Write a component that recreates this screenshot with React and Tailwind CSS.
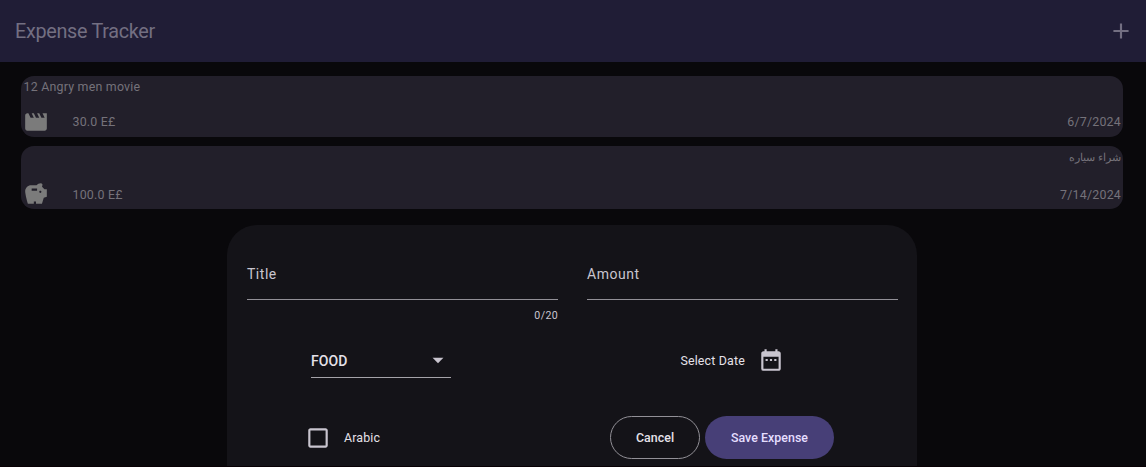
import { MdAdd, MdArrowDropDown, MdCheckBoxOutlineBlank, MdDateRange, MdMovie, MdSavings } from "react-icons/md";

function Expense({ title, amount, date, icon: Icon, rtl, className }) {
  return (
    <article className={`flex flex-col justify-between rounded-[13px] bg-[#221f2a] pr-[2px] pl-[2px] text-[12.4px] tracking-[0.22px] text-[#75727a] ${className}`}>
      {rtl ? (
        <h2 dir="rtl" className="pt-px text-[11.4px] leading-5 tracking-normal">{title}</h2>
      ) : (
        <h2 className="pt-px pl-[0.5px] leading-5">{title}</h2>
      )}
      <div className="flex h-[30px] items-center">
        <Icon className="size-[26px] text-[#7b7b7b]" />
        <span className={rtl ? "ml-[23.5px] pt-[2px]" : "ml-[23.5px]"}>{amount}</span>
        <time className={rtl ? "ml-auto pt-[2px]" : "ml-auto"}>{date}</time>
      </div>
    </article>
  );
}

function Field({ label, counter }) {
  return (
    <div className="w-[311px]">
      <div className="h-[36px] border-b border-[#929097] text-[14px] leading-5 tracking-[0.52px] text-[#c9c5cf]">{label}</div>
      {counter && <div className="pt-[6px] text-right text-[10.6px] leading-5 tracking-[0.35px] text-[#c9c5cf]">{counter}</div>}
    </div>
  );
}

function ExpenseForm() {
  return (
    <section className="absolute top-[225px] left-[227px] h-[241px] w-[690px] overflow-hidden rounded-t-[30px] bg-[#141318] text-[#e5e1e9]">
      <div className="flex h-[110px] justify-between pt-[39px] pr-[19px] pl-[20px]">
        <Field label="Title" counter="0/20" />
        <Field label="Amount" />
      </div>
      <div className="flex h-[50px] items-start justify-between pr-[133px] pl-[84px]">
        <div className="flex h-[43px] w-[140px] items-center justify-between border-b border-[#a5a3a9] pt-[8px] text-[14px] font-medium tracking-[0.1px]">
          <span className="pt-[2px]">FOOD</span>
          <MdArrowDropDown className="size-[26px] text-[#c9c5cf]" />
        </div>
        <div className="flex h-[50px] items-center gap-[13px] text-[12.4px] tracking-[0.18px]">
          <span className="pt-[2px]">Select Date</span>
          <MdDateRange className="size-[26px] text-[#c9c5cf]" />
        </div>
      </div>
      <div className="flex h-[105px] items-center pr-[83px] pl-[78px]">
        <MdCheckBoxOutlineBlank className="size-[26px] text-[#c9c5cf]" />
        <span className="ml-[13px] pt-px text-[12.4px] tracking-[0.15px]">Arabic</span>
        <button className="ml-auto h-[43px] w-[90px] rounded-full border border-[#929097] pt-[2px] text-[12.4px] font-medium tracking-[0.04px]">Cancel</button>
        <button className="ml-[5px] h-[43px] w-[129px] rounded-full bg-[#473f77] pt-[2px] text-[12.4px] font-medium tracking-[0.04px] text-[#e5deff]">Save Expense</button>
      </div>
    </section>
  );
}

export default function App() {
  return (
    <main className="relative h-[467px] w-full overflow-hidden border-b border-[#080004] bg-[#09080b] font-['Roboto','Noto_Sans',sans-serif]">
      <header className="flex h-[62px] items-center justify-between bg-[#201d36] pr-[12px] pl-[15px] text-[#736f82]">
        <h1 className="pt-px text-[19.8px] tracking-[-0.3px]">Expense Tracker</h1>
        <MdAdd className="size-[26px]" />
      </header>
      <div className="flex flex-col gap-[9px] pt-[14px] pr-[23px] pl-[21px]">
        <Expense className="h-[61px]" title="12 Angry men movie" amount="30.0 E£" date="6/7/2024" icon={MdMovie} />
        <Expense className="h-[63px]" title="شراء سياره" amount="100.0 E£" date="7/14/2024" icon={MdSavings} rtl />
      </div>
      <ExpenseForm />
    </main>
  );
}
